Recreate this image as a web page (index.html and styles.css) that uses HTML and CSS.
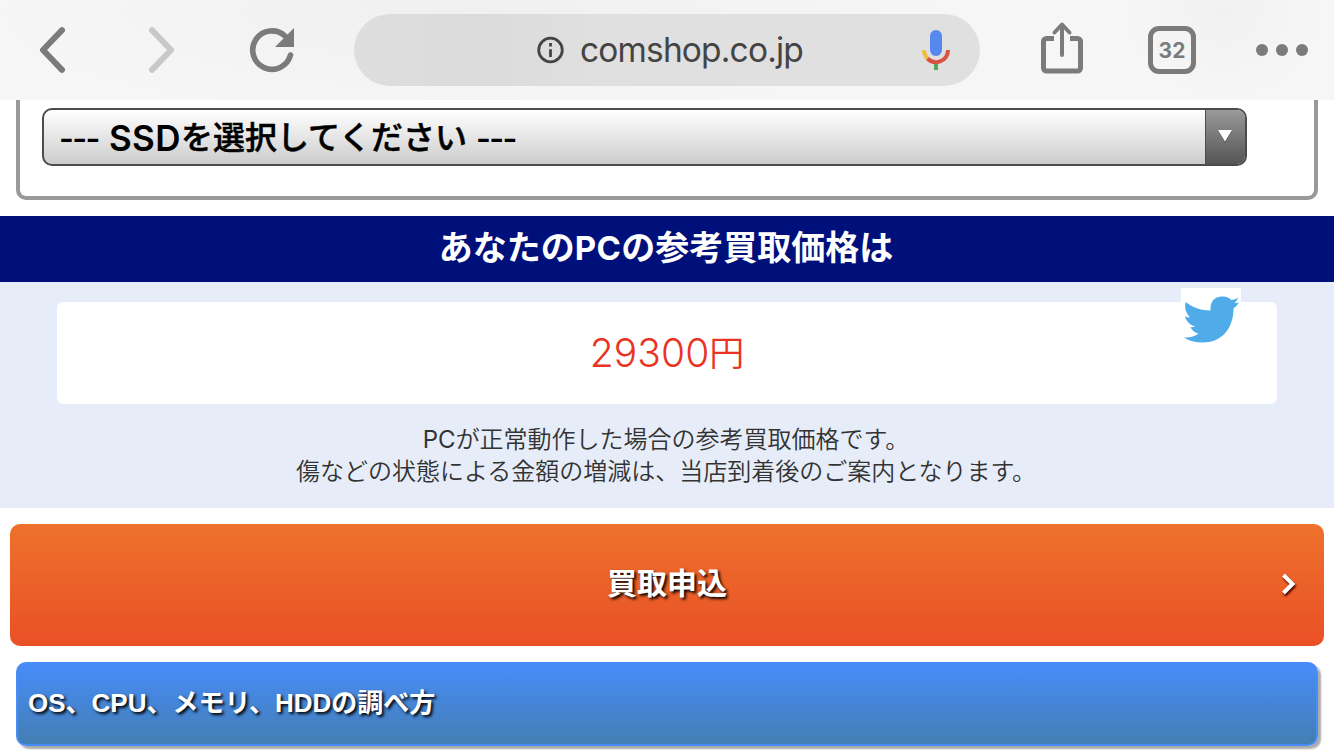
FILE: index.html
```html
<!DOCTYPE html>
<html lang="ja">
<head>
<meta charset="utf-8">
<title>comshop.co.jp</title>
<link rel="stylesheet" href="styles.css">
</head>
<body>
<header class="toolbar">
  <svg class="icon back" width="28" height="50" viewBox="0 0 28 50"><path d="M24 5.2 5 25l19 19.8" /></svg>
  <svg class="icon forward" width="28" height="50" viewBox="0 0 28 50"><path d="M4 5.2 23 25 4 44.8" /></svg>
  <svg class="icon reload" width="46" height="46" viewBox="0 0 46 46"><path d="M41.500 28A19.2 19.2 0 1 1 36 9" /><path class="solid" d="M45 1v19H26z" /></svg>
  <div class="address">
    <svg class="info" width="28" height="28" viewBox="0 0 28 28"><circle cx="14.500" cy="14" r="11.800" /><path d="M14.500 13.200v7.800M14.500 7v3.400" /></svg>
    <span class="url">comshop.co.jp</span>
    <svg class="mic" width="28" height="42" viewBox="0 0 28 42">
      <rect x="8" y="1" width="12" height="26" rx="6" fill="#5788ee" />
      <path d="M2 21a12 12 0 0 0 3.5 8.5" stroke="#f0bd3e" />
      <path d="M5.5 29.5A12 12 0 0 0 26 21" stroke="#db5244" />
      <path d="M14 35v6" stroke="#58a55c" />
    </svg>
  </div>
  <svg class="icon share" width="44" height="54" viewBox="0 0 44 54"><path d="M14 17.500H6.500a3 3 0 0 0-3 3V47a3 3 0 0 0 3 3h31a3 3 0 0 0 3-3V20.500a3 3 0 0 0-3-3H30" /><path class="arrow" d="M22 34V4M14.500 11.500 22 3.500l7.500 8" /></svg>
  <div class="tabs">32</div>
  <div class="more"><i></i><i></i><i></i></div>
</header>
<main>
  <section class="parts">
    <div class="select">
      <div class="select-text"><span class="dash">---</span><span class="latin">SSD</span><span class="jp">を選択してください</span><span class="dash end">---</span></div>
      <div class="select-arrow"><svg width="16" height="15" viewBox="0 0 16 15"><path d="M1 2h14L8 14z" fill="#444" opacity=".6" /><path d="M1 1h14L8 12.500z" fill="#fff" /></svg></div>
    </div>
  </section>
  <h2 class="title">あなたの<span class="pc">PC</span>の参考買取価格は</h2>
  <section class="result">
    <div class="price"><span class="num">29300</span><span class="yen">円</span>
      <svg class="bird" width="60" height="60" viewBox="0 0 60 60"><path d="M4.500 14C11 19 20 22.500 29.500 22.500C29 14 33 9 40 8.500C45 8 48 9.500 50.500 12Q54 11.500 57 9.800Q56 13 53.500 15Q56 15 58 14.500Q56 18 52.500 20.500C52.500 39 42 54.500 22 54.500Q10.500 54.500 3 49.500Q12 50 17.500 45.500Q11.500 44 9.500 39Q12 39.500 14 38.500Q5 35.500 4 28Q6 29.500 9 29.500Q2.500 23 4.500 14Z" /></svg>
    </div>
    <p class="note"><span class="note-pc">PC</span>が正常動作した場合の参考買取価格です。</p>
    <p class="note">傷などの状態による金額の増減は、当店到着後のご案内となります。</p>
  </section>
  <a class="apply"><span class="apply-label">買取申込</span><svg class="chevron" width="20" height="26" viewBox="0 0 20 26"><path d="M4.500 4 13.500 13l-9 9" /></svg></a>
  <a class="guide"><span>OS、CPU、</span><span>メモリ、</span><span>HDDの調べ方</span></a>
</main>
</body>
</html>
```
FILE: styles.css
```css
* { box-sizing: border-box; }
body { margin: 0; height: 750px; overflow: hidden; background: #fff; font-family: Inter, "Noto Sans CJK JP", sans-serif; }
svg { display: block; flex: none; fill: none; }
.toolbar { display: flex; align-items: center; height: 100px; padding-left: 38px; background: radial-gradient(ellipse 480px 110px at 470px 10px, #f0f0f0, transparent), radial-gradient(ellipse 100px 90px at 1224px 10px, #f1f1f1, transparent), #f6f6f6; }
.icon { stroke: #7b7b7b; stroke-width: 6; stroke-linecap: round; stroke-linejoin: round; }
.forward { margin-left: 82px; stroke: #c8c8c8; }
.reload { margin-left: 73px; stroke-width: 5.6; }
.reload .solid { fill: #7b7b7b; stroke: none; }
.address { display: flex; align-items: center; width: 626px; height: 72px; margin-left: 59px; padding-left: 182px; border-radius: 36px; background: linear-gradient(90deg, #dedede, #dbdbdb 20%, #e0e0e0 40%); }
.info { stroke: #444; stroke-width: 2.8; }
.url { width: 228px; margin-left: 16px; color: #444; font-size: 33.5px; line-height: 40px; letter-spacing: -.84px; white-space: nowrap; }
.mic { margin-left: 114px; stroke-width: 4; }
.share { margin-left: 60px; margin-top: -4px; stroke-width: 5; stroke-linecap: butt; }
.share .arrow { stroke-width: 4; stroke-linecap: round; }
.tabs { width: 48px; height: 48px; margin-left: 64px; border: 5px solid #7b7b7b; border-radius: 11px; color: #7b7b7b; font-size: 21px; font-weight: 650; line-height: 40px; text-align: center; }
.more { display: flex; gap: 8px; margin-left: 60px; }
.more i { width: 12px; height: 12px; border-radius: 50%; background: #7b7b7b; }
.parts { height: 100px; margin: 0 16px 16px; padding: 8px 0 0 22px; border: solid #999; border-width: 0 4px 4px; border-radius: 0 0 10px 10px; }
.select { display: flex; width: 1205px; height: 58px; border: 2px solid #4c4c4c; border-radius: 10px; overflow: hidden; background: linear-gradient(#fff, #ccc); }
.select-text { display: flex; flex: 1; padding-left: 15px; color: #000; font-size: 32px; font-weight: 600; line-height: 57px; white-space: nowrap; }
.dash { width: 50px; letter-spacing: -1.6px; }
.latin { width: 72px; font-family: Inter, sans-serif; font-size: 35px; font-weight: 600; letter-spacing: .3px; }
.jp { width: 288px; font-family: "Noto Sans CJK JP", sans-serif; font-weight: 500; line-height: 51px; -webkit-text-stroke: .5px #000; }
.end { margin-left: 7px; }
.select-arrow { display: grid; place-items: start center; width: 40px; padding: 19px 2px 0 0; border-left: 1px solid #4c4c4c; background: linear-gradient(#999, #555); }
.title { height: 66px; margin: 0; padding-right: 2px; background: #00107b; color: #fff; font: 700 34px/60px "Noto Sans CJK JP", sans-serif; text-align: center; }
.pc { font-family: Inter, sans-serif; font-size: 33px; letter-spacing: .4px; }
.result { height: 226px; padding: 20px 57px 0; background: #e6edf8; }
.price { display: flex; position: relative; justify-content: center; height: 102px; margin-bottom: 18px; border-radius: 6px; background: #fff; color: #ea3323; font-family: "Noto Sans CJK JP", sans-serif; font-weight: 350; line-height: 98px; }
.num { font-family: Inter, sans-serif; font-size: 39px; font-weight: 300; line-height: 101px; letter-spacing: .1px; }
.yen { font-size: 35px; }
.bird { position: absolute; top: -14px; right: 36px; background: #fff; }
.bird path { fill: #50abe9; }
.note { margin: 0; height: 32px; padding-right: 2px; color: #333; font: 350 24px/31px "Noto Sans CJK JP", sans-serif; text-align: center; white-space: nowrap; }
.note-pc { font-family: Inter, sans-serif; font-weight: 400; font-size: 24px; line-height: 1; }
.apply { display: flex; position: relative; align-items: center; justify-content: center; height: 122px; margin: 16px 10px; border-radius: 10px; background: linear-gradient(#ee712c, #ea5026); color: #fff; font: 700 30px/44px "Noto Sans CJK JP", sans-serif; text-shadow: 2px 2px 3px #000; }
.apply-label { padding-bottom: 9px; }
.chevron { position: absolute; right: 25px; top: 47px; stroke: #fff; stroke-width: 4; filter: drop-shadow(1px 2px 1px #400); }
.guide { display: flex; height: 84px; margin: 0 16px; padding-left: 10px; border: 2px solid #488cf7; border-radius: 10px; background: linear-gradient(#488cf9, #437eb3); box-shadow: 3px 3px 2px #aaa; color: #fff; font: 700 26px/78px "Liberation Sans", "Noto Sans CJK JP", sans-serif; text-shadow: 2px 2px 3px #000; white-space: nowrap; }
```
